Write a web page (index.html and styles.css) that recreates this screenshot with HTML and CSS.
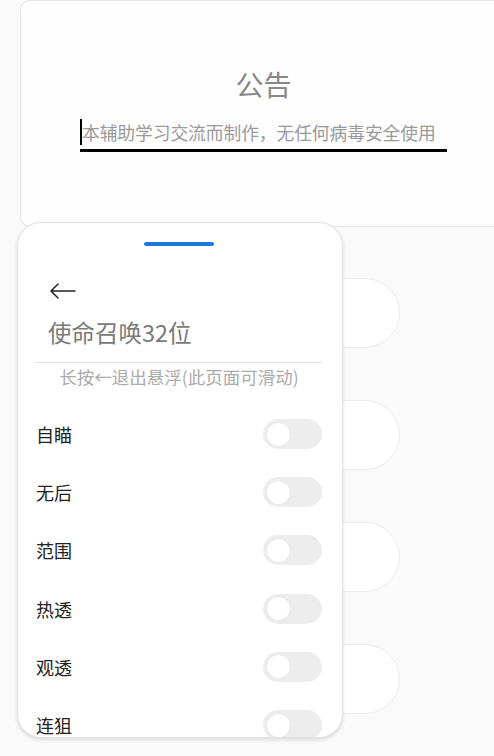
FILE: index.html
```html
<!DOCTYPE html>
<html lang="zh">
<head>
<meta charset="utf-8">
<link rel="stylesheet" href="styles.css">
</head>
<body>
<div class="notice">
  <div class="notice-title">公告</div>
  <div class="notice-input"><span class="caret"></span>本辅助学习交流而制作，无任何病毒安全使用</div>
</div>
<div class="bg-list">
  <div class="bg-pill"></div>
  <div class="bg-pill"></div>
  <div class="bg-pill"></div>
  <div class="bg-pill"></div>
</div>
<div class="panel">
  <div class="handle"></div>
  <div class="back">
    <svg width="26" height="16" viewBox="0 0 26 16"><path d="M1 8 H25 M8 1 L1 8 L8 15" fill="none" stroke="#222" stroke-width="1.5" stroke-linecap="round" stroke-linejoin="round"/></svg>
  </div>
  <div class="panel-title">使命召唤32位</div>
  <div class="divider"></div>
  <div class="hint">长按←退出悬浮(此页面可滑动)</div>
  <div class="rows">
    <div class="row"><span class="label">自瞄</span><span class="toggle"><span class="knob"></span></span></div>
    <div class="row"><span class="label">无后</span><span class="toggle"><span class="knob"></span></span></div>
    <div class="row"><span class="label">范围</span><span class="toggle"><span class="knob"></span></span></div>
    <div class="row"><span class="label">热透</span><span class="toggle"><span class="knob"></span></span></div>
    <div class="row"><span class="label">观透</span><span class="toggle"><span class="knob"></span></span></div>
    <div class="row"><span class="label">连狙</span><span class="toggle"><span class="knob"></span></span></div>
  </div>
</div>
</body>
</html>
```
FILE: styles.css
```css
html, body {
  margin: 0;
  padding: 0;
}
body {
  background: #fafafa;
  font-family: "Noto Sans CJK SC", "Noto Sans", sans-serif;
  width: 494px;
  height: 756px;
  overflow: hidden;
  position: relative;
}
.notice {
  margin-left: 20px;
  width: 490px;
  height: 227px;
  box-sizing: border-box;
  background: #fefefe;
  border: 1px solid #e6e6e6;
  border-right: none;
  border-radius: 10px 0 0 10px;
  display: flex;
  flex-direction: column;
  align-items: center;
  padding-top: 63px;
}
.notice-title {
  font-size: 28px;
  line-height: 40px;
  color: #888;
  margin-left: -4px;
}
.notice-input {
  margin-top: 14px;
  margin-left: -4px;
  width: 367px;
  font-size: 17.8px;
  line-height: 28px;
  padding-bottom: 3px;
  color: #9a9a9a;
  border-bottom: 3px solid #000;
  display: flex;
  align-items: center;
  white-space: nowrap;
  letter-spacing: -0.1px;
}
.caret {
  display: inline-block;
  width: 2px;
  height: 26px;
  background: #000;
}
.bg-list {
  display: flex;
  flex-direction: column;
  gap: 52px;
  padding-top: 51px;
}
.bg-pill {
  margin-left: 20px;
  width: 380px;
  height: 70px;
  box-sizing: border-box;
  background: #fff;
  border: 1px solid #ececec;
  border-radius: 0 35px 35px 0;
}
.panel {
  position: absolute;
  left: 17px;
  top: 222px;
  width: 326px;
  height: 516px;
  box-sizing: border-box;
  background: #fff;
  border: 1px solid #e2e2e2;
  border-radius: 24px;
  box-shadow: 0 2px 4px rgba(0,0,0,0.12);
  overflow: hidden;
  padding: 0 20px 0 18px;
}
.handle {
  width: 70px;
  height: 4px;
  border-radius: 2px;
  background: #1d78df;
  margin: 19px auto 0;
}
.back {
  margin-top: 37px;
  margin-left: 14px;
  height: 16px;
  display: flex;
}
.panel-title {
  margin-top: 18px;
  margin-left: 12px;
  font-size: 23.5px;
  line-height: 30px;
  color: #7a7a7a;
}
.divider {
  margin-top: 15px;
  height: 1px;
  background: #e0e0e0;
}
.hint {
  margin-top: 3px;
  text-align: center;
  font-size: 17.5px;
  line-height: 22px;
  color: #ababab;
}
.rows {
  margin-top: 17px;
}
.row {
  height: 58.2px;
  display: flex;
  align-items: center;
  justify-content: space-between;
}
.label {
  font-size: 18px;
  color: #222;
}
.toggle {
  width: 59px;
  height: 30px;
  border-radius: 15px;
  background: #ededed;
  display: flex;
  align-items: center;
  padding-left: 4px;
  box-sizing: border-box;
}
.knob {
  width: 23px;
  height: 23px;
  border-radius: 50%;
  background: #fff;
  box-shadow: 0 0 1px rgba(0,0,0,0.15);
}
```
